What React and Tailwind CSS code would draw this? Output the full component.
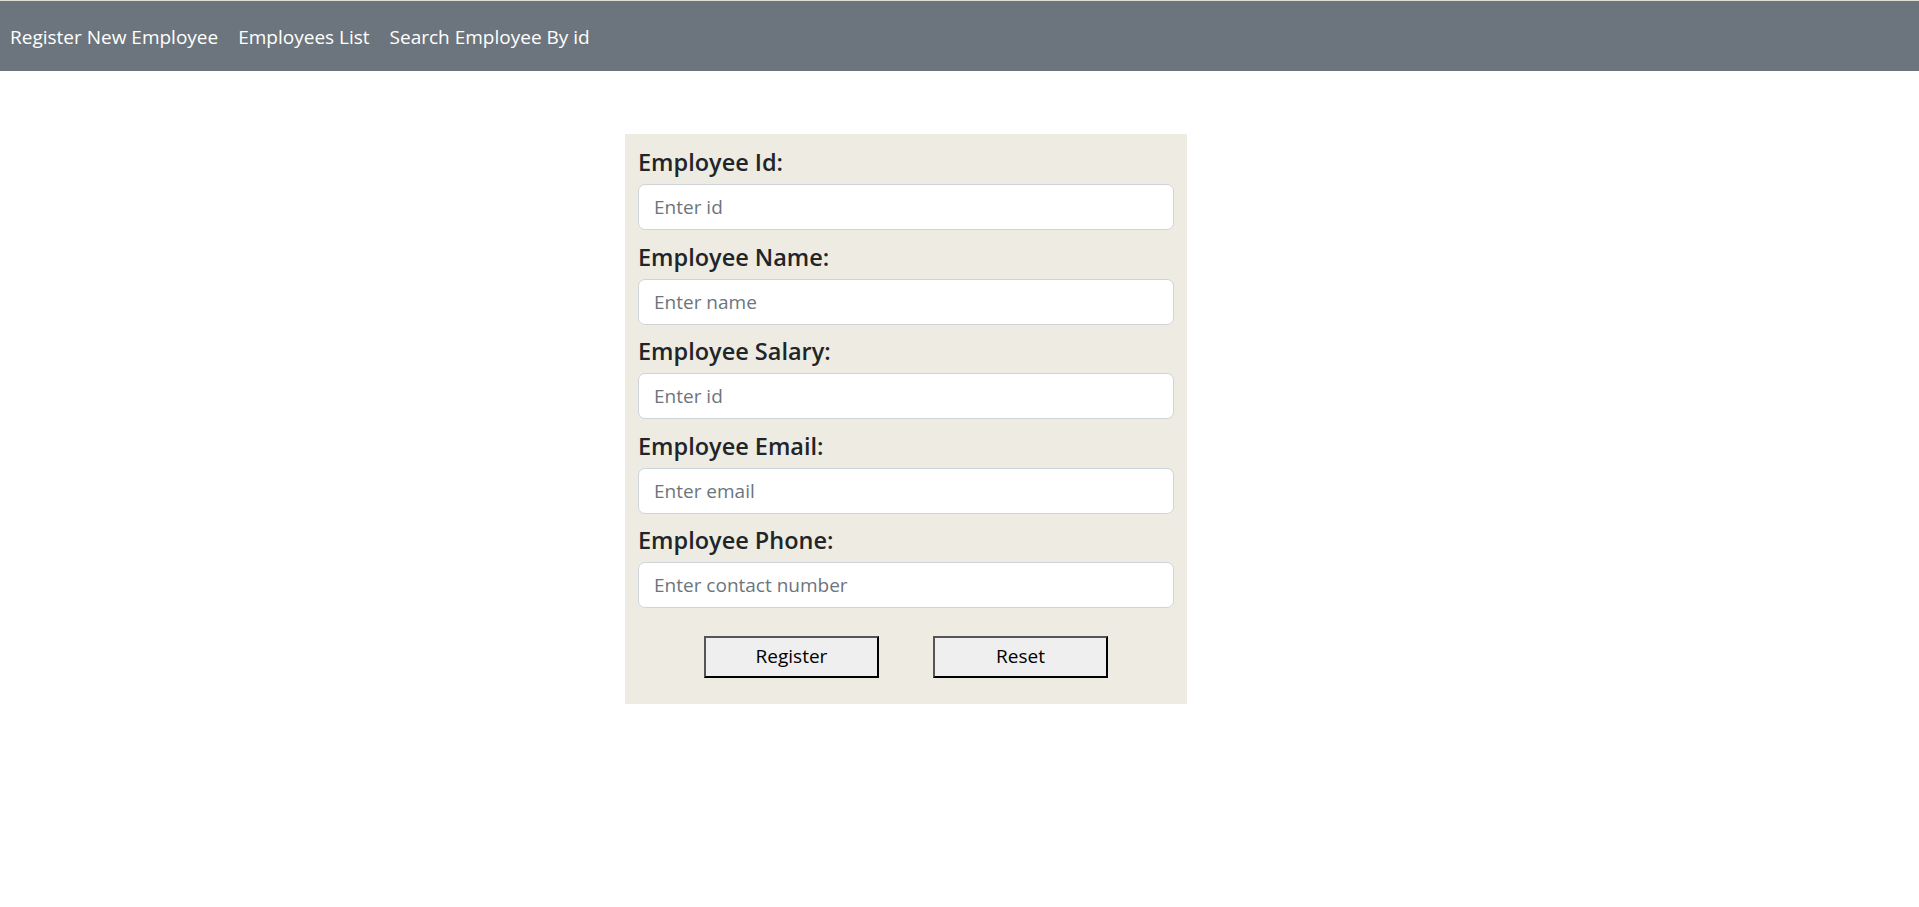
import React, { useState } from 'react';

const fields = [
    { key: 'id', label: 'Employee Id:', placeholder: 'Enter id' },
    { key: 'name', label: 'Employee Name:', placeholder: 'Enter name' },
    { key: 'salary', label: 'Employee Salary:', placeholder: 'Enter id' },
    { key: 'email', label: 'Employee Email:', placeholder: 'Enter email' },
    { key: 'phone', label: 'Employee Phone:', placeholder: 'Enter contact number' },
];

const emptyForm = { id: '', name: '', salary: '', email: '', phone: '' };

const App = () => {
    const [form, setForm] = useState(emptyForm);

    return (
        <div className="min-h-screen bg-white font-['Open_Sans',sans-serif]">
            {/* Top navigation */}
            <nav className="border-t border-[#dfe0d5] bg-[#6c757d] h-[71px] flex items-center pt-[2px]">
                <a href="#" className="px-[10px] text-[19px] text-white">Register New Employee</a>
                <a href="#" className="px-[10px] text-[19px] text-white">Employees List</a>
                <a href="#" className="px-[10px] text-[19px] text-white">Search Employee By id</a>
            </nav>

            <div className="pl-[625px] pt-[63px]">
                <form
                    className="w-[562px] bg-[#eeece2] px-[13px] pt-[13px] pb-[26px]"
                    onSubmit={(e) => e.preventDefault()}
                >
                    {fields.map((f) => (
                        <div key={f.key} className="mb-[11.5px]">
                            <label className="block text-[23.5px] leading-[30px] font-semibold text-[#212529] mb-[7px]">{f.label}</label>
                            <input
                                className="w-full h-[46px] bg-white border border-[#ced4da] rounded-[7px] px-[15px] text-[19px] text-[#212529] placeholder:text-[#6c757d] outline-none"
                                placeholder={f.placeholder}
                                value={form[f.key]}
                                onChange={(e) => setForm({ ...form, [f.key]: e.target.value })}
                            />
                        </div>
                    ))}

                    <div className="flex justify-center gap-[54px] pt-[16px]">
                        <button type="submit" className="w-[175px] h-[42px] bg-[#efefef] border-2 border-t-[#555] border-l-[#555] border-r-black border-b-black text-[19px] text-black">
                            Register
                        </button>
                        <button type="button" onClick={() => setForm(emptyForm)} className="w-[175px] h-[42px] bg-[#efefef] border-2 border-t-[#555] border-l-[#555] border-r-black border-b-black text-[19px] text-black">
                            Reset
                        </button>
                    </div>
                </form>
            </div>
        </div>
    );
};

export default App;
